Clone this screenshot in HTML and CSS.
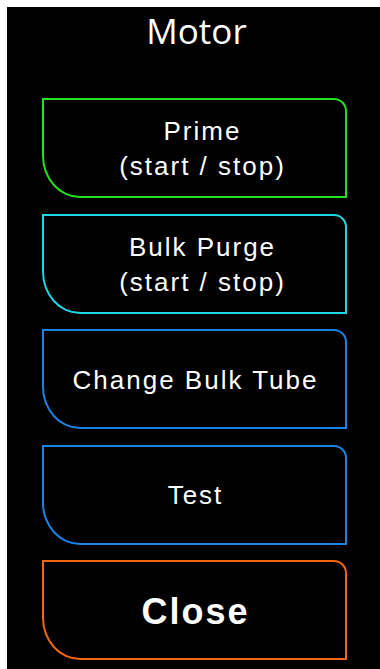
FILE: index.html
```html
<!DOCTYPE html>
<html lang="en">
<head>
    <meta charset="UTF-8">
    <meta name="viewport" content="width=device-width, initial-scale=1.0">
    <link rel="stylesheet" href="styles.css">
    <title>Motor</title>
</head>
<body>
    <div class="panel">
        <h1 class="title">Motor</h1>
        <div class="buttons">
            <div class="button green toggle">Prime<br>(start / stop)</div>
            <div class="button cyan toggle">Bulk Purge<br>(start / stop)</div>
            <div class="button blue">Change Bulk Tube</div>
            <div class="button blue">Test</div>
            <div class="button orange close">Close</div>
        </div>
    </div>
</body>
</html>
```

FILE: styles.css
```css
body{
    margin: 0;
    background: #fff;
}
.panel{
    margin: 7px 0 0 7px;
    height: 662px;
    background: #000;
    color: #fff;
    overflow: hidden;
}
.title{
    margin: 0;
    padding-top: 3px;
    height: 91px;
    font-family: "Open Sans", sans-serif;
    font-weight: normal;
    font-size: 35px;
    line-height: 42px;
    text-align: center;
    padding-left: 6px;
    box-sizing: border-box;
}
.buttons{
    display: flex;
    flex-direction: column;
    gap: 15.5px;
    padding-left: 35px;
}
.button{
    box-sizing: border-box;
    width: 305px;
    height: 100px;
    border: 2px solid;
    border-radius: 0 13px 0 38px / 0 13px 0 42px;
    display: flex;
    align-items: center;
    justify-content: center;
    text-align: center;
    font-family: "Liberation Sans", Arial, sans-serif;
    font-size: 26px;
    line-height: 35px;
    letter-spacing: 2px;
    padding: 2px 0 0 2px;
}
.toggle{
    padding-left: 16px;
}
.green{ border-color: #25e025; }
.cyan{ border-color: #20d6e6; }
.blue{ border-color: #1b82e6; }
.orange{ border-color: #f06810; }
.close{
    font-weight: bold;
    font-size: 36px;
    letter-spacing: 2px;
}
```
